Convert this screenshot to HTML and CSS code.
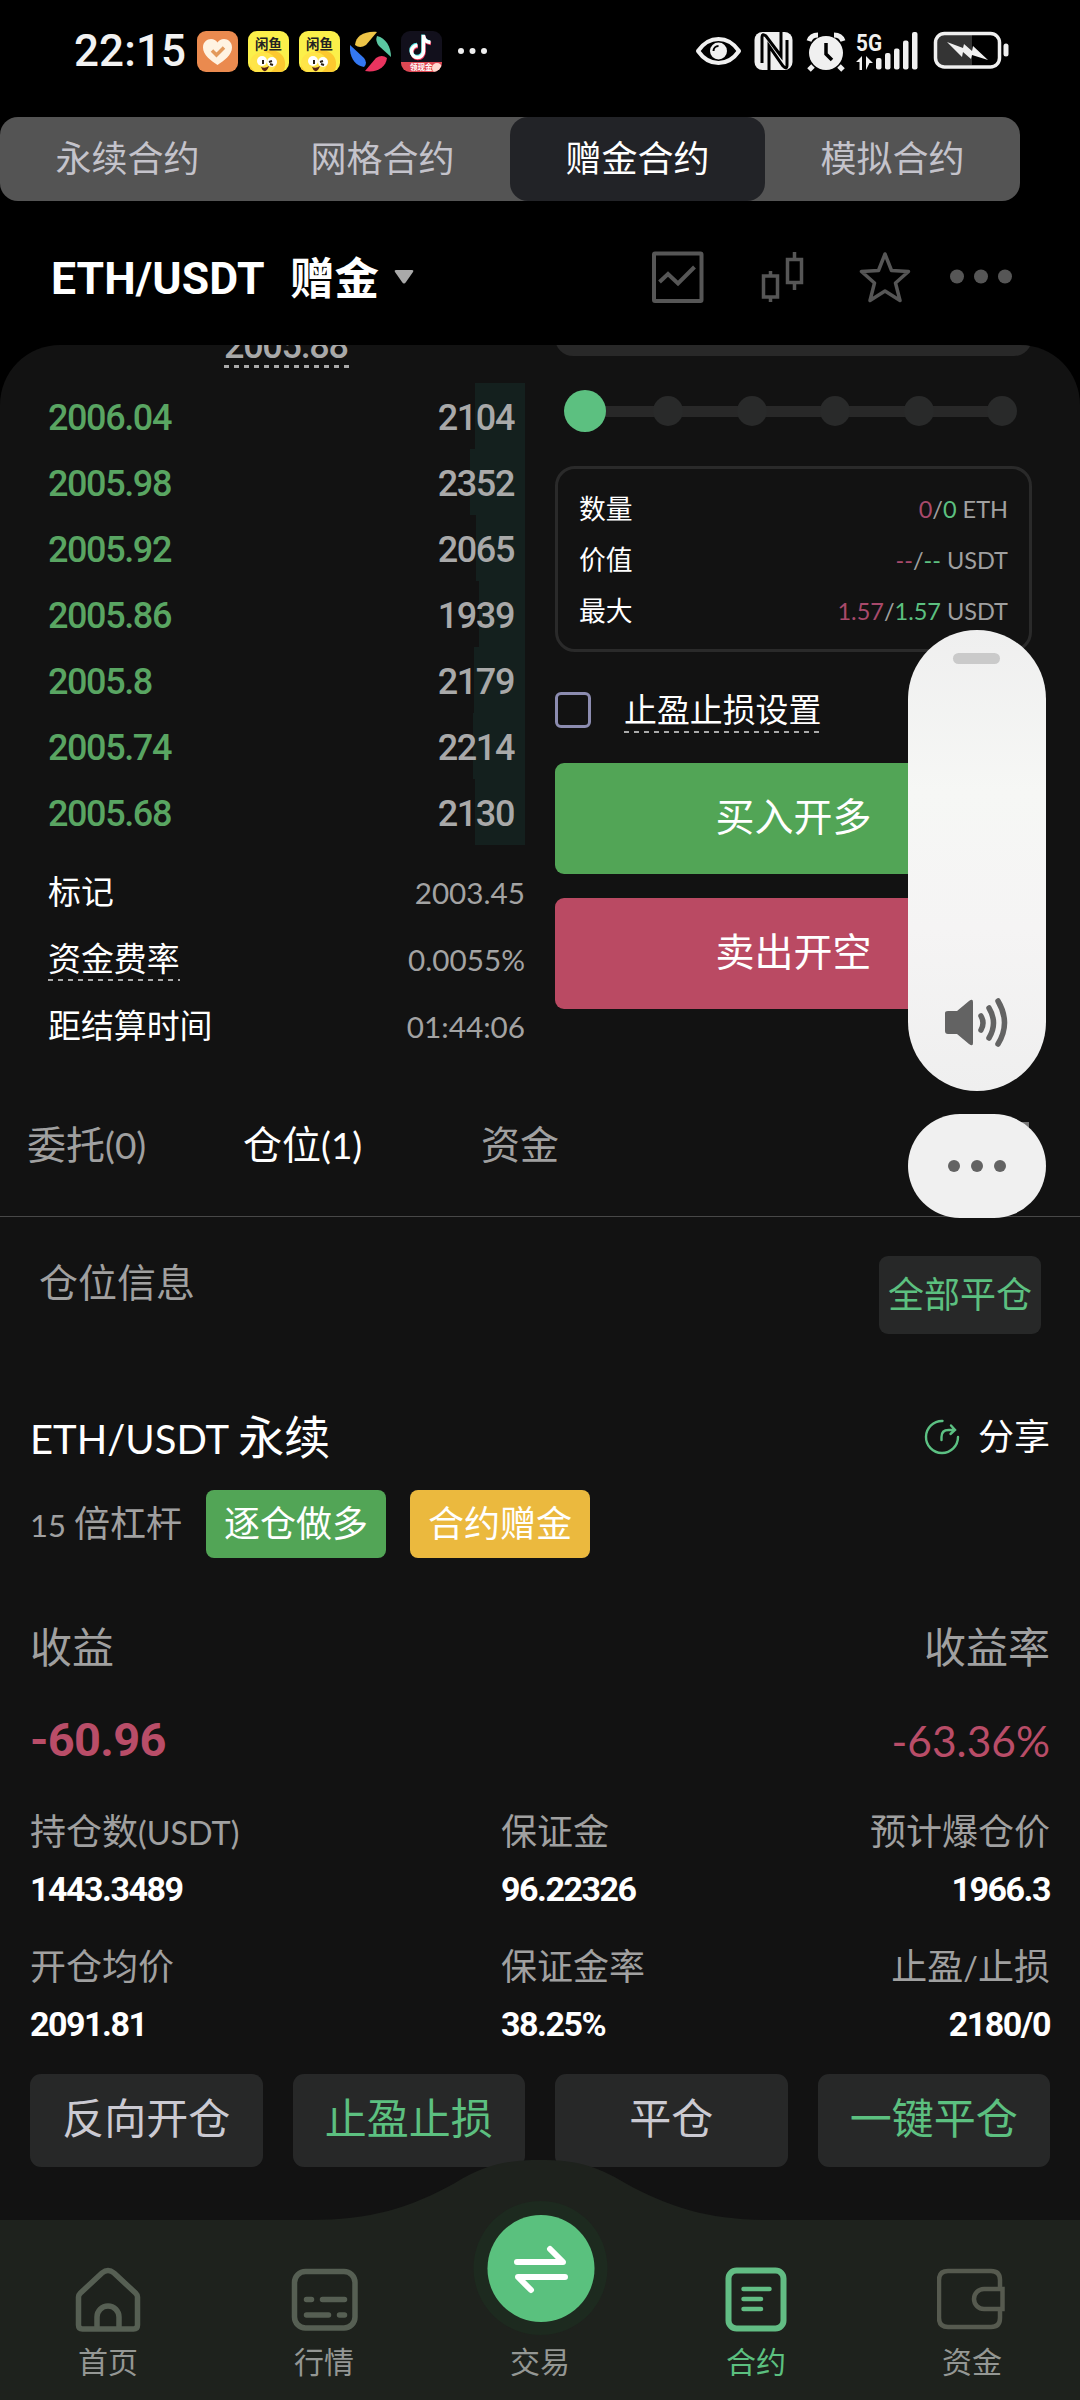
FILE: index.html
```html
<!DOCTYPE html>
<html lang="zh-CN">
<head>
<meta charset="utf-8">
<title>ETH/USDT 赠金合约</title>
<link rel="stylesheet" href="styles.css">
</head>
<body>
<div class="app">
  <header class="status">
    <div class="status-left">
      <span class="clock">22:15</span>
      <svg class="app-icon" viewBox="0 0 41 41"><rect width="41" height="41" rx="9" fill="#ea8a4f"/><path d="M20.500 34C14 29.500 6 24 6 16.500C6 11 10 8 14 8c3 0 5 1.300 6.500 3.500C22 9.300 24 8 27 8c4 0 8 3 8 8.500C35 24 27 29.500 20.500 34z" fill="#fff3e2"/><path d="M15 19.500l4.500 4.500 7.500-7.500" fill="none" stroke="#e39a5c" stroke-width="3.500"/></svg>
      <svg class="app-icon" viewBox="0 0 41 41"><clipPath id="fish"><rect width="41" height="41" rx="9"/></clipPath><g id="fish-app" clip-path="url(#fish)"><rect width="41" height="41" fill="#fbf04a"/><path d="M2 41C2 30 6 22 16 21c5-3 14-2 18 3 4 5 4 12 1 17z" fill="#fcc92f"/><ellipse cx="15" cy="32" rx="13" ry="11" fill="#ffe548"/><circle cx="14" cy="30" r="5" fill="#fff"/><circle cx="24" cy="31" r="5" fill="#fff"/><path d="M15 29v4M21 31l3-1M22 33l3 1" stroke="#2a2014" stroke-width="2" fill="none"/><path d="M13 36q4 2 8-1q-2 6-5 5q-2-1-3-4z" fill="#592314"/><text x="7" y="17.500" class="fish-text">闲鱼</text></g></svg>
      <svg class="app-icon" viewBox="0 0 41 41"><use href="#fish-app"/></svg>
      <svg class="app-icon" viewBox="0 0 41 41"><path d="M5 14C6 5 14 0 27 1L16 14Q10 18 5 14z" fill="#edc447"/><path d="M27 5c9 2 14 11 14 21L29 15q-4-5-2-10z" fill="#5bc7a2"/><path d="M37 27c-1 9-10 15-22 13L26 27q6-4 11 0z" fill="#ea345f"/><path d="M0 14l14 13q4 5 0 9C5 35-1 26 0 14z" fill="#3478f2"/></svg>
      <svg class="app-icon" viewBox="0 0 41 41"><clipPath id="note"><rect width="41" height="41" rx="9"/></clipPath><g clip-path="url(#note)"><rect width="41" height="41" fill="#12101c"/><g fill="none" stroke-width="3.500"><path d="M17 15.500a6 6 0 1 0 6 6V5c0 5 3 7 7 7.500" stroke="#ee3358"/><path d="M16 13.500a6 6 0 1 0 6 6V3.500c0 5 3 7 7 7.500" stroke="#5ce6e8"/><path d="M16.500 14.500a6 6 0 1 0 6 6V4c0 5 3 7 7 7.500" stroke="#fff"/></g><rect y="31" width="41" height="10" fill="#dd4853"/><circle cx="36" cy="37" r="5" fill="#ffd9cf"/><text x="9" y="39" class="note-text">领现金</text></g></svg>
      <svg class="more-dots" viewBox="0 0 32 12"><g fill="#eee"><circle cx="5" cy="6" r="3"/><circle cx="16.500" cy="6" r="3"/><circle cx="28" cy="6" r="3"/></g></svg>
    </div>
    <svg class="status-right" viewBox="0 0 320 44">
      <g fill="#f0f0f0">
        <path d="M4 22C15 6 34 6 45 22C34 38 15 38 4 22z" transform="translate(2 0)" fill="none" stroke="#f0f0f0" stroke-width="4" stroke-linejoin="round"/>
        <circle cx="26.500" cy="22" r="8.500"/><path d="M21.500 22a5 5 0 0 1 5-5" fill="none" stroke="#000" stroke-width="2"/>
        <rect x="62.500" y="3" width="38" height="38" rx="8"/>
        <path d="M77 42V17l14 20q4 4 4-1V11M70 34V8q0-4 4-1l15 20V2" fill="none" stroke="#000" stroke-width="3"/>
        <circle cx="134" cy="24" r="17"/><path d="M121 37l-4 4M147 37l4 4M117 12q2-6 9-6M151 12q-2-6-9-6" stroke="#f0f0f0" stroke-width="5" fill="none"/><path d="M134 14v11l6 6" stroke="#000" stroke-width="3.500" fill="none"/>
        <text x="164" y="21.500" class="net-text" textLength="26" lengthAdjust="spacingAndGlyphs">5G</text>
        <path d="M170 27v14h-2.500v-8h-3.500zM174 41V27l7 7h-3.500z"/>
        <rect x="184" y="29" width="5.500" height="11.500" rx="2"/><rect x="193" y="24" width="5.500" height="16.500" rx="2"/><rect x="202" y="19.500" width="5.500" height="21" rx="2"/><rect x="211" y="11.500" width="5.500" height="29" rx="2"/><rect x="220" y="3" width="5.500" height="37.500" rx="2"/>
        <path d="M244 6h36v30h-36z" fill="#343434"/><rect x="243.500" y="4.500" width="64" height="33.500" rx="9" fill="none" stroke="#f0f0f0" stroke-width="3.500"/><rect x="311.500" y="14.500" width="5" height="13" rx="2.500"/>
        <path d="M255 13l16 6 1-4 8 7 1-5 15 14-16-5-1 4-8-7-1 5z"/>
      </g>
    </svg>
  </header>

  <nav class="segments">
    <span class="segment">永续合约</span><span class="segment">网格合约</span><span class="segment active">赠金合约</span><span class="segment">模拟合约</span>
  </nav>

  <div class="pair-bar">
    <span class="pair">ETH/USDT</span><span class="pair-kind">赠金</span>
    <svg class="caret" viewBox="0 0 20 16"><path d="M2 1h16q2 0 1 2l-7 10q-2 3-4 0L1 3Q0 1 2 1z" fill="#a9a9a9"/></svg>
    <svg class="tools" viewBox="0 0 364 54">
      <g fill="none" stroke="#565656" stroke-width="4">
        <rect x="4" y="3.500" width="47.500" height="47.500" rx="1"/><path d="M9.500 32l8.500-8 10 9.500L44.500 17"/>
        <path d="M113.500 26h14v21h-14zM120.500 21v5M120.500 47v5M137.500 9.500h14v23h-14zM144.500 2v7M144.500 33v7" stroke-width="3.500"/>
        <path d="M235 4l6.500 16.500 17 1-13 11.500 4.500 17.500-15-9.500-15 9.500 4.500-17.500-13-11.500 17-1z" stroke-width="3.500" stroke-linejoin="round"/>
      </g>
      <g fill="#565656"><circle cx="307" cy="26.500" r="7"/><circle cx="331" cy="26.500" r="7"/><circle cx="355" cy="26.500" r="7"/></g>
    </svg>
  </div>

  <main class="panel">
    <section class="trade">
      <div class="book">
        <div class="last-price">2005.88</div>
        <div class="bid" style="--depth:50px"><span>2006.04</span><b>2104</b></div>
        <div class="bid" style="--depth:55px"><span>2005.98</span><b>2352</b></div>
        <div class="bid" style="--depth:49px"><span>2005.92</span><b>2065</b></div>
        <div class="bid" style="--depth:46px"><span>2005.86</span><b>1939</b></div>
        <div class="bid" style="--depth:51px"><span>2005.8</span><b>2179</b></div>
        <div class="bid" style="--depth:52px"><span>2005.74</span><b>2214</b></div>
        <div class="bid" style="--depth:50px"><span>2005.68</span><b>2130</b></div>
        <dl class="facts">
          <div><dt>标记</dt><dd>2003.45</dd></div>
          <div><dt><span class="dashed">资金费率</span></dt><dd>0.0055%</dd></div>
          <div><dt>距结算时间</dt><dd>01:44:06</dd></div>
        </dl>
      </div>
      <div class="order">
        <div class="amount-field"></div>
        <div class="slider"><i class="thumb"></i><i></i><i></i><i></i><i></i><i></i></div>
        <dl class="limits">
          <div><dt>数量</dt><dd><em>0</em>/<ins>0</ins> ETH</dd></div>
          <div><dt>价值</dt><dd><em>--</em>/<ins>--</ins> USDT</dd></div>
          <div><dt>最大</dt><dd><em>1.57</em>/<ins>1.57</ins> USDT</dd></div>
        </dl>
        <label class="tpsl"><i class="box"></i><span class="dashed">止盈止损设置</span></label>
        <div class="trade-btn buy">买入开多</div>
        <div class="trade-btn sell">卖出开空</div>
      </div>
    </section>

    <nav class="tabs">
      <span>委托<small>(0)</small></span><span class="on">仓位<small>(1)</small></span><span>资金</span><i class="history-icon"></i>
    </nav>

    <div class="section-head"><span>仓位信息</span><span class="close-all">全部平仓</span></div>

    <section class="position">
      <div class="title-row">
        <span class="title"><small>ETH/USDT </small>永续</span>
        <span class="share"><svg viewBox="0 0 36 36"><g fill="none" stroke="#5cc183" stroke-width="2.400" stroke-linecap="round"><path d="M18.500 2A16 16 0 1 0 34 18"/><path d="M17.500 21v-3q0-7 7-7H30M27 6.500l4 4.500-4.500 4"/></g></svg>分享</span>
      </div>
      <div class="tags"><span class="leverage"><small>15 </small>倍杠杆</span><span class="tag long">逐仓做多</span><span class="tag bonus">合约赠金</span></div>
      <div class="profit-label"><span>收益</span><span>收益率</span></div>
      <div class="profit"><b>-60.96</b><span>-63.36%</span></div>
      <div class="stats">
        <div><span>持仓数<small>(USDT)</small></span><b>1443.3489</b></div>
        <div><span>保证金</span><b>96.22326</b></div>
        <div><span>预计爆仓价</span><b>1966.3</b></div>
        <div><span>开仓均价</span><b>2091.81</b></div>
        <div><span>保证金率</span><b>38.25%</b></div>
        <div><span>止盈<small>/</small>止损</span><b>2180/0</b></div>
      </div>
      <div class="actions"><span>反向开仓</span><span class="green">止盈止损</span><span>平仓</span><span class="green">一键平仓</span></div>
    </section>
  </main>

  <footer class="dock">
    <svg class="dock-shape" viewBox="0 0 1080 242"><path d="M0 62H310C370 62 410 50 455 25C485 7 505 2 540 2C575 2 595 7 625 25C670 50 710 62 770 62H1080V242H0z" fill="#1e221d"/><circle cx="540.500" cy="110" r="67" fill="#1d2a1f"/><circle cx="541" cy="110.500" r="53.500" fill="#5ac17e"/><path d="M517 104h46l-13-13M565 119H518l13 13" fill="none" stroke="#fff" stroke-width="6" stroke-linecap="round" stroke-linejoin="round"/></svg>
    <div class="dock-items">
      <div class="dock-item"><svg viewBox="0 0 70 70"><g fill="none" stroke="#565f53" stroke-width="5.500" stroke-linejoin="round"><path d="M5.500 32q0-2 2-4L29 8q6-5 12 0l21.500 20q2 2 2 4v28q0 4-4 4h-51q-4 0-4-4z"/><path d="M24 64V52a11 11 0 0 1 22 0v12"/></g></svg>首页</div>
      <div class="dock-item"><svg viewBox="0 0 70 70"><rect x="5.500" y="6.500" width="60.500" height="56.500" rx="11" fill="none" stroke="#565f53" stroke-width="5.500"/><path d="M17.500 34.500h5M33.500 34.500h22M17.500 50h22M50.500 50h5" stroke="#565f53" stroke-width="5.500" stroke-linecap="round"/></svg>行情</div>
      <div class="dock-item"><svg viewBox="0 0 70 70"></svg>交易</div>
      <div class="dock-item on"><svg viewBox="0 0 70 70"><rect x="7.500" y="5.500" width="55" height="58" rx="8" fill="none" stroke="#62bd84" stroke-width="6"/><path d="M22.500 24h26M22.500 34h17.500M22.500 44h17.500" stroke="#62bd84" stroke-width="4.500" stroke-linecap="round"/></svg>合约</div>
      <div class="dock-item"><svg viewBox="0 0 70 70"><g fill="none" stroke="#565a4f" stroke-width="4.500"><path d="M63 24V15q0-9-9-9H11q-9 0-9 9v38q0 9 9 9h43q9 0 9-9v-9"/><path d="M65.500 24H47a10 10 0 0 0 0 20H65.500z"/></g></svg>资金</div>
    </div>
  </footer>

  <div class="volume"><i class="volume-grip"></i><svg viewBox="0 0 66 52"><path d="M1 16q0-2 3-2h9l12-10q4-3 4 1v41q0 4-4 1L13 37H4q-3 0-3-3z" fill="#636363"/><g fill="none" stroke="#636363" stroke-width="5.500" stroke-linecap="round"><path d="M37 19q4 7 0 14M45 11q9 15 0 30M54 4q13 22 0 43"/></g></svg></div>
  <div class="volume-more"><i></i><i></i><i></i></div>
</div>
</body>
</html>
```
FILE: styles.css
```css
* { box-sizing: border-box; }
body { margin: 0; background: #000; }
i, em, ins { font-style: normal; text-decoration: none; }
dl, dd { margin: 0; }

.app {
  position: relative;
  display: flex;
  flex-direction: column;
  width: 1080px;
  height: 2400px;
  overflow: hidden;
  background: #000;
  color: #fff;
  font-family: Lato, "Noto Sans CJK SC", sans-serif;
}

/* Status bar */
.status { display: flex; justify-content: space-between; height: 117px; padding: 29px 68px 0 74px; }
.status-left { display: flex; align-items: center; height: 44px; gap: 10px; }
.clock { width: 113px; font: 500 44px/46px Roboto, sans-serif; letter-spacing: .1px; color: #f2f2f2; }
.app-icon { width: 41px; height: 41px; }
.more-dots { width: 32px; height: 12px; margin-left: 4px; }
.status-right { width: 320px; height: 44px; }
.fish-text { font: 700 13.500px "Noto Sans CJK SC", sans-serif; fill: #222; }
.note-text { font: 700 7.500px "Noto Sans CJK SC", sans-serif; fill: #fff; }
.net-text { font: 700 24px Roboto, sans-serif; }

/* Contract type switch */
.segments { display: flex; width: 1020px; height: 84px; border-radius: 18px; background: #545454; }
.segment { flex: 1; text-align: center; font-size: 36px; line-height: 82px; color: #c4c3cb; }
.segment.active { border-radius: 18px; background: #222327; color: #fff; }

/* Pair header */
.pair-bar { display: flex; align-items: center; height: 144px; padding: 8px 66px 0 51px; }
.pair { width: 239px; font: 700 44.500px/60px Roboto, sans-serif; letter-spacing: .1px; padding-top: 4px; }
.pair-kind { width: 103px; font-size: 44.500px; font-weight: 700; line-height: 60px; padding-top: 2px; }
.caret { width: 20px; height: 16px; margin-left: 1px; }
.tools { width: 364px; height: 54px; margin-left: auto; }

.panel { flex: 1; overflow: hidden; border-radius: 60px 60px 0 0; background: #121212; }

/* Order book and order form */
.trade { display: grid; grid-template-columns: 477px 477px; column-gap: 30px; height: 723px; padding-left: 48px; }
.last-price {
  width: 125px; height: 46px; margin: -23px 0 14.500px 176px;
  font: 500 36px/48px Roboto, sans-serif; letter-spacing: -1.300px; color: #a9a9a9;
  background: repeating-linear-gradient(90deg, #a9a9a9 0 5px, transparent 5px 10px) 0 100% / 100% 3px no-repeat;
}
.bid {
  display: flex; justify-content: space-between; height: 66px; padding-right: 11px;
  font: 500 36px/70px Roboto, sans-serif; letter-spacing: -1.400px; color: #59a562;
  background: linear-gradient(to left, #14201e var(--depth), transparent var(--depth));
}
.bid b { font-weight: 500; color: #a9a9a9; }
.facts { padding-top: 13px; }
.facts div { display: flex; justify-content: space-between; height: 67px; line-height: 67px; }
.facts dt { font-size: 32.900px; }
.facts dd { font-size: 29.700px; line-height: 69px; color: #a3a3a3; }
.dashed {
  display: inline-block; height: 56px;
  background: repeating-linear-gradient(90deg, #aaa 0 5px, transparent 5px 10px) 0 100% / 100% 2px no-repeat;
}

.amount-field { height: 60px; margin-top: -49px; border-radius: 18px; background: #282828; }
.slider {
  display: flex; justify-content: space-between; align-items: center;
  height: 42px; margin: 34px 15px 34px 9px;
  background: linear-gradient(#282828, #282828) 20px 50% / 420px 11px no-repeat;
}
.slider i { width: 30px; height: 30px; border-radius: 50%; background: #292a2a; }
.slider .thumb { width: 42px; height: 42px; margin-right: -6px; background: #5cc080; }
.limits { height: 186px; padding: 14px 21px; border: 3px solid #2a2a2a; border-radius: 20px; }
.limits div { display: flex; justify-content: space-between; height: 51px; line-height: 53px; }
.limits dt { font-size: 26.800px; }
.limits dd { font-size: 23.500px; color: #a0a0a0; }
.limits em { color: #a8496b; }
.limits ins { color: #5cc080; }
.tpsl { display: flex; align-items: center; gap: 33px; height: 111px; font-size: 32.900px; line-height: 56px; }
.tpsl .box { width: 36px; height: 36px; margin-top: 4px; border: 3px solid #8c8cb0; border-radius: 6px; }
.tpsl .dashed { height: 51px; }
.trade-btn { height: 111px; margin-bottom: 24px; border-radius: 9px; text-align: center; font-size: 39px; line-height: 107px; }
.buy { background: #52a556; }
.sell { background: #ba4a63; }

/* Order / position tabs */
.tabs { display: flex; height: 149px; padding: 28px 51px 0 27px; border-bottom: 1.500px solid #484848; font-size: 39px; line-height: 96px; color: #a0a0a0; }
.tabs span { width: 216px; }
.tabs span:nth-child(2) { width: 238px; }
.tabs small { font-size: 37px; }
.tabs .on { color: #fff; }
.history-icon { width: 34px; height: 34px; margin: 26px 0 0 auto; border: 4px solid #777; }

.section-head { display: flex; justify-content: space-between; height: 156px; padding: 39px 39px 0 39px; font-size: 39px; line-height: 52px; color: #a0a0a0; }
.close-all { width: 162px; height: 78px; border-radius: 9px; background: #272828; text-align: center; font-size: 36px; line-height: 76px; color: #5cc080; }

/* Position card */
.position { padding: 24px 30px 0; }
.position small { font-size: .9em; }
.title-row { display: flex; justify-content: space-between; align-items: center; height: 80px; }
.title { font-size: 46px; line-height: 60px; padding-top: 1px; }
.title small { font-size: 40px; }
.share { display: flex; align-items: center; gap: 18px; font-size: 36px; line-height: 56px; padding-bottom: 3px; }
.share svg { width: 36px; height: 36px; margin-top: 3px; }
.tags { display: flex; margin-top: 13px; height: 68px; line-height: 66px; font-size: 36px; }
.leverage { width: 176px; color: #a0a0a0; }
.leverage small { font-size: 31px; }
.tag { width: 180px; margin-right: 24px; border-radius: 8px; text-align: center; }
.tag.long { background: #52a556; }
.tag.bonus { background: #ebb93e; }
.profit-label { display: flex; justify-content: space-between; margin-top: 59px; height: 60px; line-height: 60px; font-size: 42px; color: #a0a0a0; }
.profit { display: flex; justify-content: space-between; margin-top: 34px; height: 60px; line-height: 60px; color: #b94d68; font-size: 42.500px; }
.profit b { font: 700 47px/58px Roboto, sans-serif; letter-spacing: -.7px; }
.stats { display: grid; grid-template-columns: 471px 1fr auto; margin-top: 32px; }
.stats div { display: flex; flex-direction: column; height: 135px; }
.stats div:nth-child(3n) { text-align: right; }
.stats span { height: 58px; line-height: 56px; font-size: 36px; color: #a0a0a0; }
.stats b { height: 58px; font: 700 34px/57px Roboto, sans-serif; letter-spacing: -1.500px; }
.actions { display: grid; grid-template-columns: repeat(4, 1fr); gap: 30px; margin-top: 1px; }
.actions span { height: 93px; border-radius: 11px; background: #272828; text-align: center; font-size: 42px; line-height: 89px; color: #cbcad2; }
.actions .green { color: #5cc080; }

/* Bottom navigation, drawn over the scrolling page */
.dock { position: absolute; left: 0; bottom: 0; width: 1080px; height: 242px; }
.dock-shape { position: absolute; inset: 0; width: 1080px; height: 242px; }
.dock-items { position: relative; display: grid; grid-template-columns: repeat(5, 216px); padding-top: 107px; }
.dock-item { display: flex; flex-direction: column; align-items: center; font-size: 30px; line-height: 40px; color: #949794; }
.dock-item svg { width: 70px; height: 70px; margin-bottom: 6px; }
.dock-item.on { color: #5cc080; }

/* System volume overlay */
.volume { position: absolute; left: 907.500px; top: 630px; width: 138px; height: 461px; display: flex; flex-direction: column; align-items: center; justify-content: space-between; padding: 23px 0 42px; border-radius: 69px; background: linear-gradient(#efefef, #f6f7f5 35%, #f5f4f4 65%, #efefef); }
.volume-grip { width: 47px; height: 11px; border-radius: 6px; background: #cacaca; }
.volume svg { width: 66px; height: 52px; }
.volume-more { position: absolute; left: 907.500px; top: 1114px; width: 138px; height: 104px; display: flex; align-items: center; justify-content: center; gap: 11px; border-radius: 52px; background: #f0f0f0; }
.volume-more i { width: 12px; height: 12px; border-radius: 50%; background: #636363; }
```
